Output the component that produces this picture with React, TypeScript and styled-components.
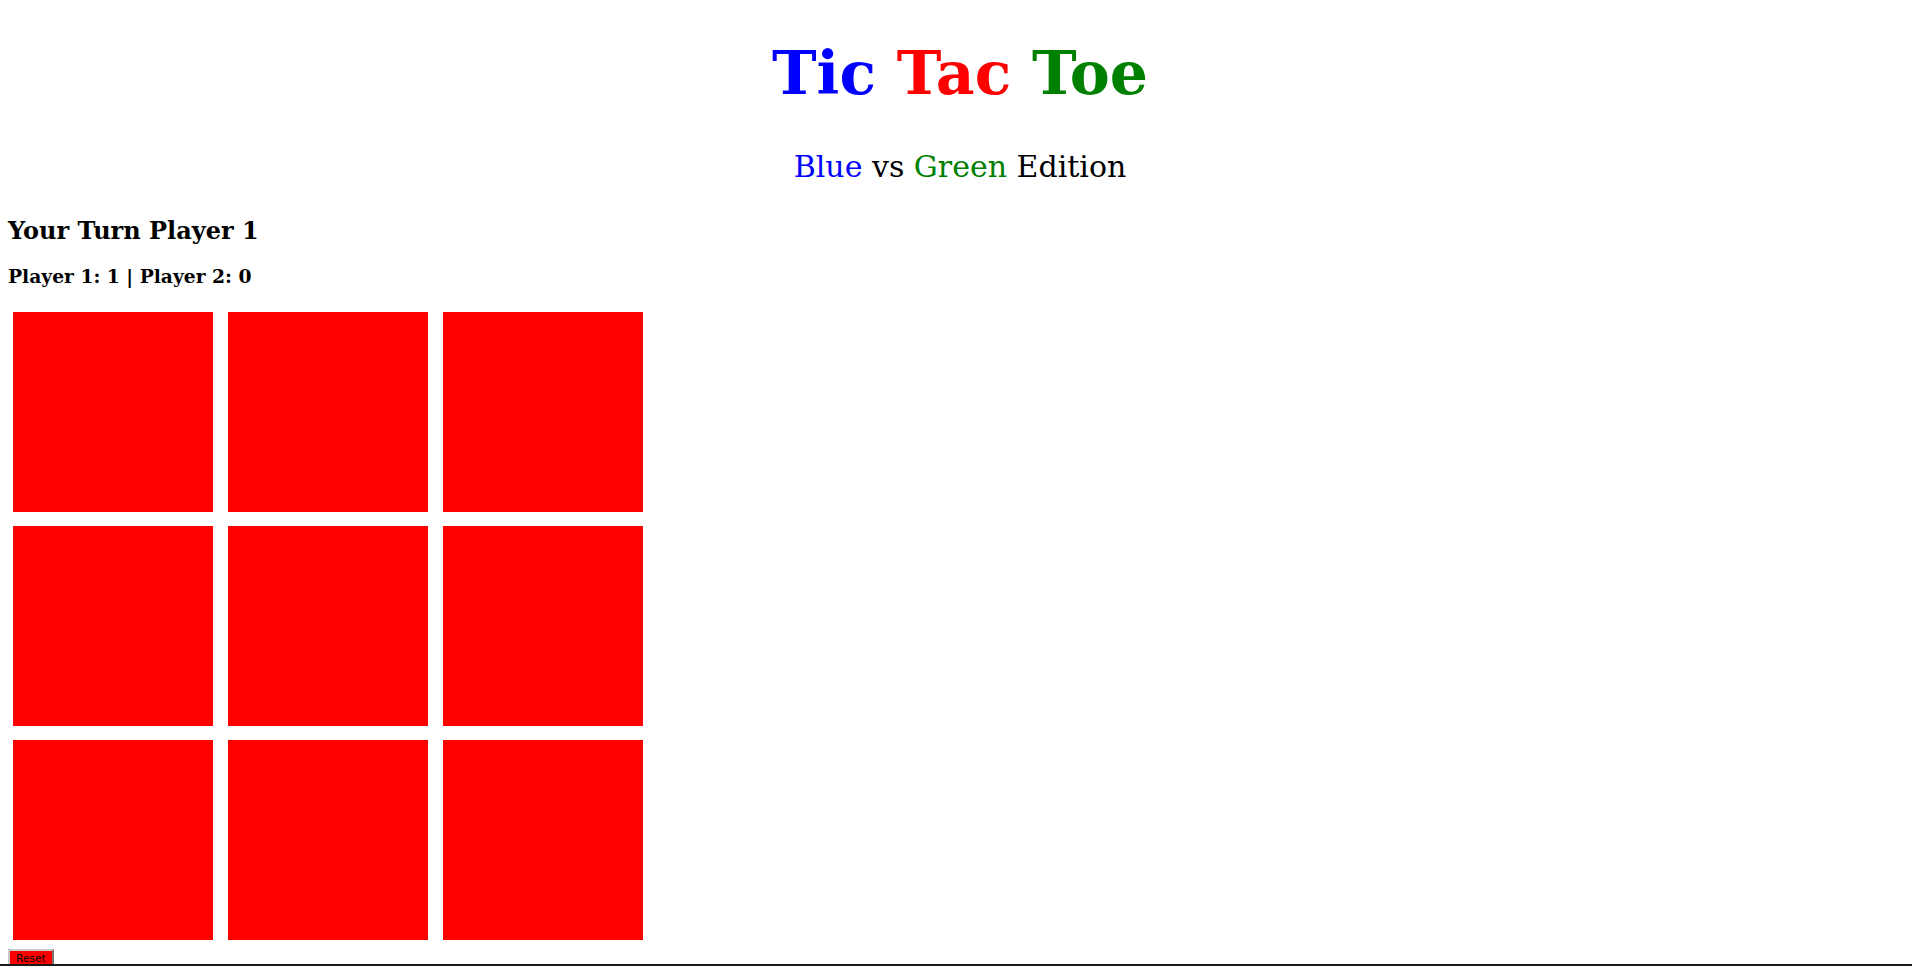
import React from "react";
import styled, { createGlobalStyle } from "styled-components";

const Global = createGlobalStyle`
  html, body { margin: 0; padding: 0; background: #ffffff; }
  body { font-family: "DejaVu Serif", serif; color: #000; }
`;

const Page = styled.div`
  padding: 8px;
  display: flex;
  flex-direction: column;
`;

const Title = styled.h1`
  margin: 30px 0 0;
  padding-left: 8px;
  font-size: 60px;
  line-height: 71px;
  font-weight: bold;
  text-align: center;
`;

const Subtitle = styled.h2`
  margin: 40px 0 0;
  padding-left: 8px;
  font-size: 30px;
  line-height: 35px;
  font-weight: normal;
  text-align: center;
`;

const Word = styled.span<{ $color: string }>`
  color: ${(p) => p.$color};
`;

const Turn = styled.h2`
  margin: 33px 0 0;
  font-size: 24px;
  line-height: 28px;
  font-weight: bold;
`;

const Score = styled.h3`
  margin: 20px 0 0;
  font-size: 18.72px;
  line-height: 22px;
  font-weight: bold;
`;

const Board = styled.div`
  margin: 25px 0 0 5px;
  display: grid;
  grid-template-columns: repeat(3, 200px);
  column-gap: 15px;
  row-gap: 14px;
`;

const Cell = styled.div`
  width: 200px;
  height: 200px;
  background: #ff0000;
`;

const ResetButton = styled.button`
  align-self: flex-start;
  margin-top: 9px;
  background: #ff0000;
  border: 2px outset #c8c8c8;
  padding: 1px 6px;
  font-family: "DejaVu Sans", sans-serif;
  font-size: 10.67px;
  line-height: 14px;
  color: #000;
`;

const BottomEdge = styled.div`
  position: fixed;
  left: 0;
  right: 0;
  bottom: 0;
  height: 2px;
  background: #1a1a1a;
`;

export default function App() {
  return (
    <>
      <Global />
      <Page>
        <Title>
          <Word $color="#0000ff">Tic</Word> <Word $color="#ff0000">Tac</Word>{" "}
          <Word $color="#008000">Toe</Word>
        </Title>
        <Subtitle>
          <Word $color="#0000ff">Blue</Word> vs <Word $color="#008000">Green</Word> Edition
        </Subtitle>
        <Turn>Your Turn Player 1</Turn>
        <Score>Player 1: 1 | Player 2: 0</Score>
        <Board>
          {Array.from({ length: 9 }).map((_, i) => (
            <Cell key={i} />
          ))}
        </Board>
        <ResetButton>Reset</ResetButton>
      </Page>
      <BottomEdge />
    </>
  );
}
